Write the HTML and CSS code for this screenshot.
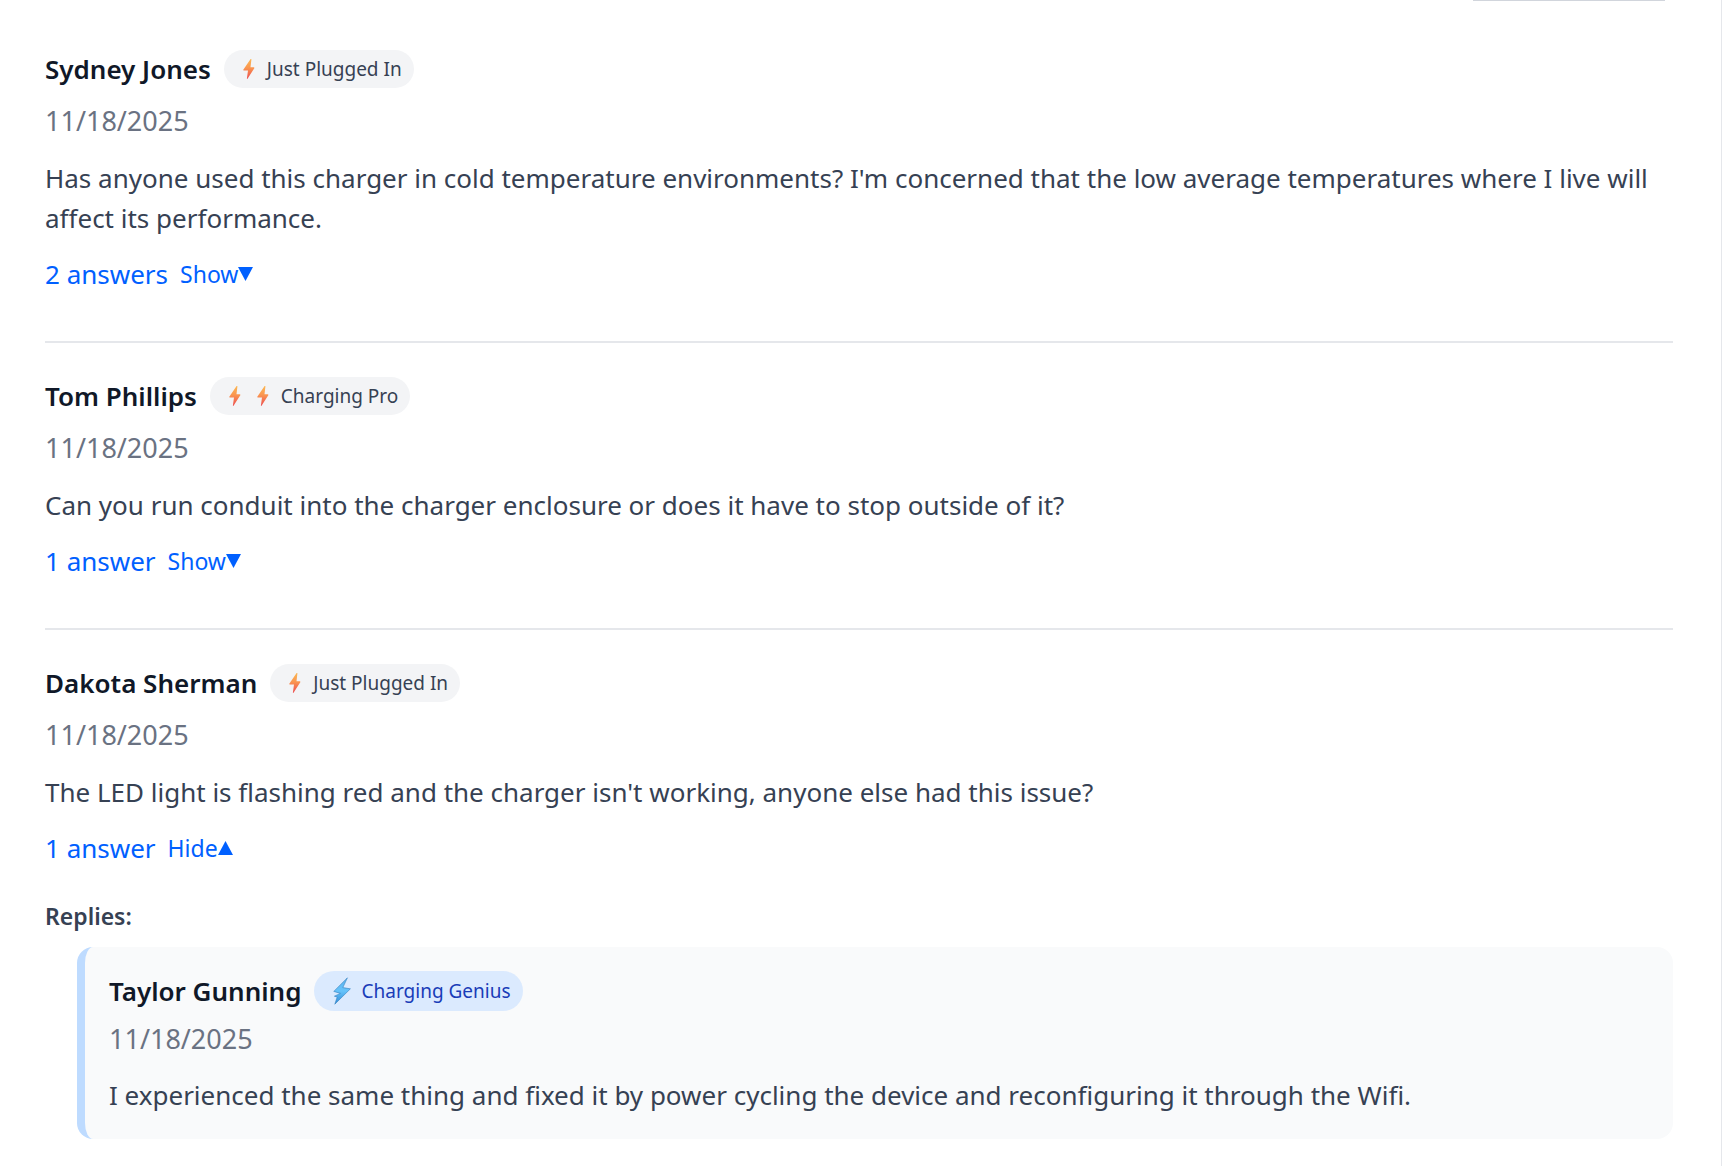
FILE: index.html
```html
<!DOCTYPE html>
<html lang="en">
<head>
<meta charset="utf-8">
<meta name="viewport" content="width=device-width, initial-scale=1">
<title>Questions and answers</title>
<link rel="stylesheet" href="styles.css">
</head>
<body>
<svg class="sprite" aria-hidden="true">
  <defs>
    <linearGradient id="warm" x1="0" y1="0" x2="0" y2="1">
      <stop offset="0" stop-color="#fbb853"/>
      <stop offset="0.45" stop-color="#fa9650"/>
      <stop offset="1" stop-color="#ec4c50"/>
    </linearGradient>
    <linearGradient id="cool" x1="0" y1="0" x2="0" y2="1">
      <stop offset="0" stop-color="#5db4ee"/>
      <stop offset="0.5" stop-color="#66c3fa"/>
      <stop offset="1" stop-color="#2f8bd8"/>
    </linearGradient>
    <symbol id="bolt" viewBox="0 0 12 20">
      <path d="M7.6 0 0.3 10.7Q0 11.4 0.8 11.4H5L3.9 19.4Q4 20.3 4.7 19.6L11.3 9.2Q11.7 8.3 10.8 8.3H7.5L8.4 0.5Q8.4-0.4 7.6 0Z" fill="url(#warm)"/>
    </symbol>
    <symbol id="genius" viewBox="0 0 18 28">
      <path d="M14.4 0.8 0.8 14.4 7.4 16.4 1.4 19.2 4.2 20 1.8 27.2 17.4 11.8 9.8 10.6Z" fill="url(#cool)" stroke="#3482bf" stroke-width="0.6" stroke-linejoin="round"/>
    </symbol>
  </defs>
</svg>
<main class="panel">
  <div class="toolbar"><div class="sort-edge"></div></div>

  <article class="question">
    <header class="author">
      <h2 class="name">Sydney Jones</h2>
      <span class="badge"><svg class="bolt"><use href="#bolt"/></svg>Just Plugged In</span>
    </header>
    <time class="date">11/18/2025</time>
    <p class="text">Has anyone used this charger in cold temperature environments? I'm concerned that the low average temperatures where I live will affect its performance.</p>
    <button class="answers" type="button">2 answers <span class="toggle">Show<svg class="caret" viewBox="0 0 15 14"><path d="M0 0H15L7.5 14Z"/></svg></span></button>
  </article>

  <article class="question">
    <header class="author">
      <h2 class="name">Tom Phillips</h2>
      <span class="badge"><svg class="bolt"><use href="#bolt"/></svg><svg class="bolt"><use href="#bolt"/></svg>Charging Pro</span>
    </header>
    <time class="date">11/18/2025</time>
    <p class="text">Can you run conduit into the charger enclosure or does it have to stop outside of it?</p>
    <button class="answers" type="button">1 answer <span class="toggle">Show<svg class="caret" viewBox="0 0 15 14"><path d="M0 0H15L7.5 14Z"/></svg></span></button>
  </article>

  <article class="question">
    <header class="author">
      <h2 class="name">Dakota Sherman</h2>
      <span class="badge"><svg class="bolt"><use href="#bolt"/></svg>Just Plugged In</span>
    </header>
    <time class="date">11/18/2025</time>
    <p class="text">The LED light is flashing red and the charger isn't working, anyone else had this issue?</p>
    <button class="answers" type="button">1 answer <span class="toggle">Hide<svg class="caret" viewBox="0 0 15 14"><path d="M0 14H15L7.5 0Z"/></svg></span></button>

    <section class="replies">
      <h3 class="replies-title">Replies:</h3>
      <div class="reply">
        <header class="author">
          <h4 class="name">Taylor Gunning</h4>
          <span class="badge badge-genius"><svg class="genius"><use href="#genius"/></svg>Charging Genius</span>
        </header>
        <time class="date">11/18/2025</time>
        <p class="text">I experienced the same thing and fixed it by power cycling the device and reconfiguring it through the Wifi.</p>
      </div>
    </section>
  </article>
</main>
</body>
</html>
```
FILE: styles.css
```css
* { box-sizing: border-box; }

body {
  margin: 0;
  background: #fff;
  color: #364153;
  font-family: "Segoe UI", "Noto Sans", sans-serif;
  font-size: 26px;
  line-height: 40px;
}

h2, h3, h4, p { margin: 0; }

.sprite {
  position: absolute;
  width: 0;
  height: 0;
}

.panel {
  min-height: 100vh;
  padding: 0 48px 0 45px;
  border-right: 1px solid #e5e7eb;
}

.toolbar {
  display: flex;
  justify-content: flex-end;
  height: 16px;
  padding-right: 8px;
}

.sort-edge {
  width: 192px;
  height: 1px;
  background: #d1d5dc;
}

.question {
  display: flex;
  flex-direction: column;
  align-items: flex-start;
  padding: 33px 0 47px;
  border-bottom: 2px solid #e5e7eb;
}

.question:last-child {
  padding-bottom: 24px;
  border-bottom: 0;
}

.author {
  display: flex;
  align-items: center;
  gap: 13px;
}

.name {
  color: #101828;
  font-size: 26px;
  font-weight: 600;
}

.badge {
  display: inline-flex;
  align-items: center;
  height: 38px;
  padding: 0 12px;
  border-radius: 20px;
  background: #f3f4f6;
  color: #364153;
  font-size: 19px;
}

.bolt {
  width: 12px;
  height: 20px;
  margin: 0 12px 0 7px;
}

.bolt + .bolt { margin-left: 4px; }

.badge-genius {
  height: 40px;
  background: #dbeafe;
  color: #193cb8;
}

.genius {
  width: 18px;
  height: 28px;
  margin: 0 10px 0 7px;
}

.date {
  margin-top: 12px;
  color: #6a7282;
  font-size: 27px;
}

.text { margin-top: 17px; }

.answers {
  display: flex;
  align-items: center;
  gap: 12px;
  margin-top: 16px;
  padding: 0;
  border: 0;
  background: none;
  color: #0060ff;
  font: inherit;
  cursor: pointer;
}

.toggle {
  display: flex;
  align-items: center;
  font-size: 23px;
}

.caret {
  width: 15px;
  height: 14px;
  fill: currentColor;
}

.replies {
  align-self: stretch;
  padding-top: 28px;
}

.replies-title {
  font-size: 23px;
  font-weight: 600;
}

.reply {
  display: flex;
  flex-direction: column;
  align-items: flex-start;
  margin: 11px 0 0 32px;
  padding: 24px;
  border-left: 8px solid #bedbff;
  border-radius: 16px;
  background: #f9fafb;
}

.reply .date { margin-top: 8px; }

.reply .text { margin-top: 16px; }
```
